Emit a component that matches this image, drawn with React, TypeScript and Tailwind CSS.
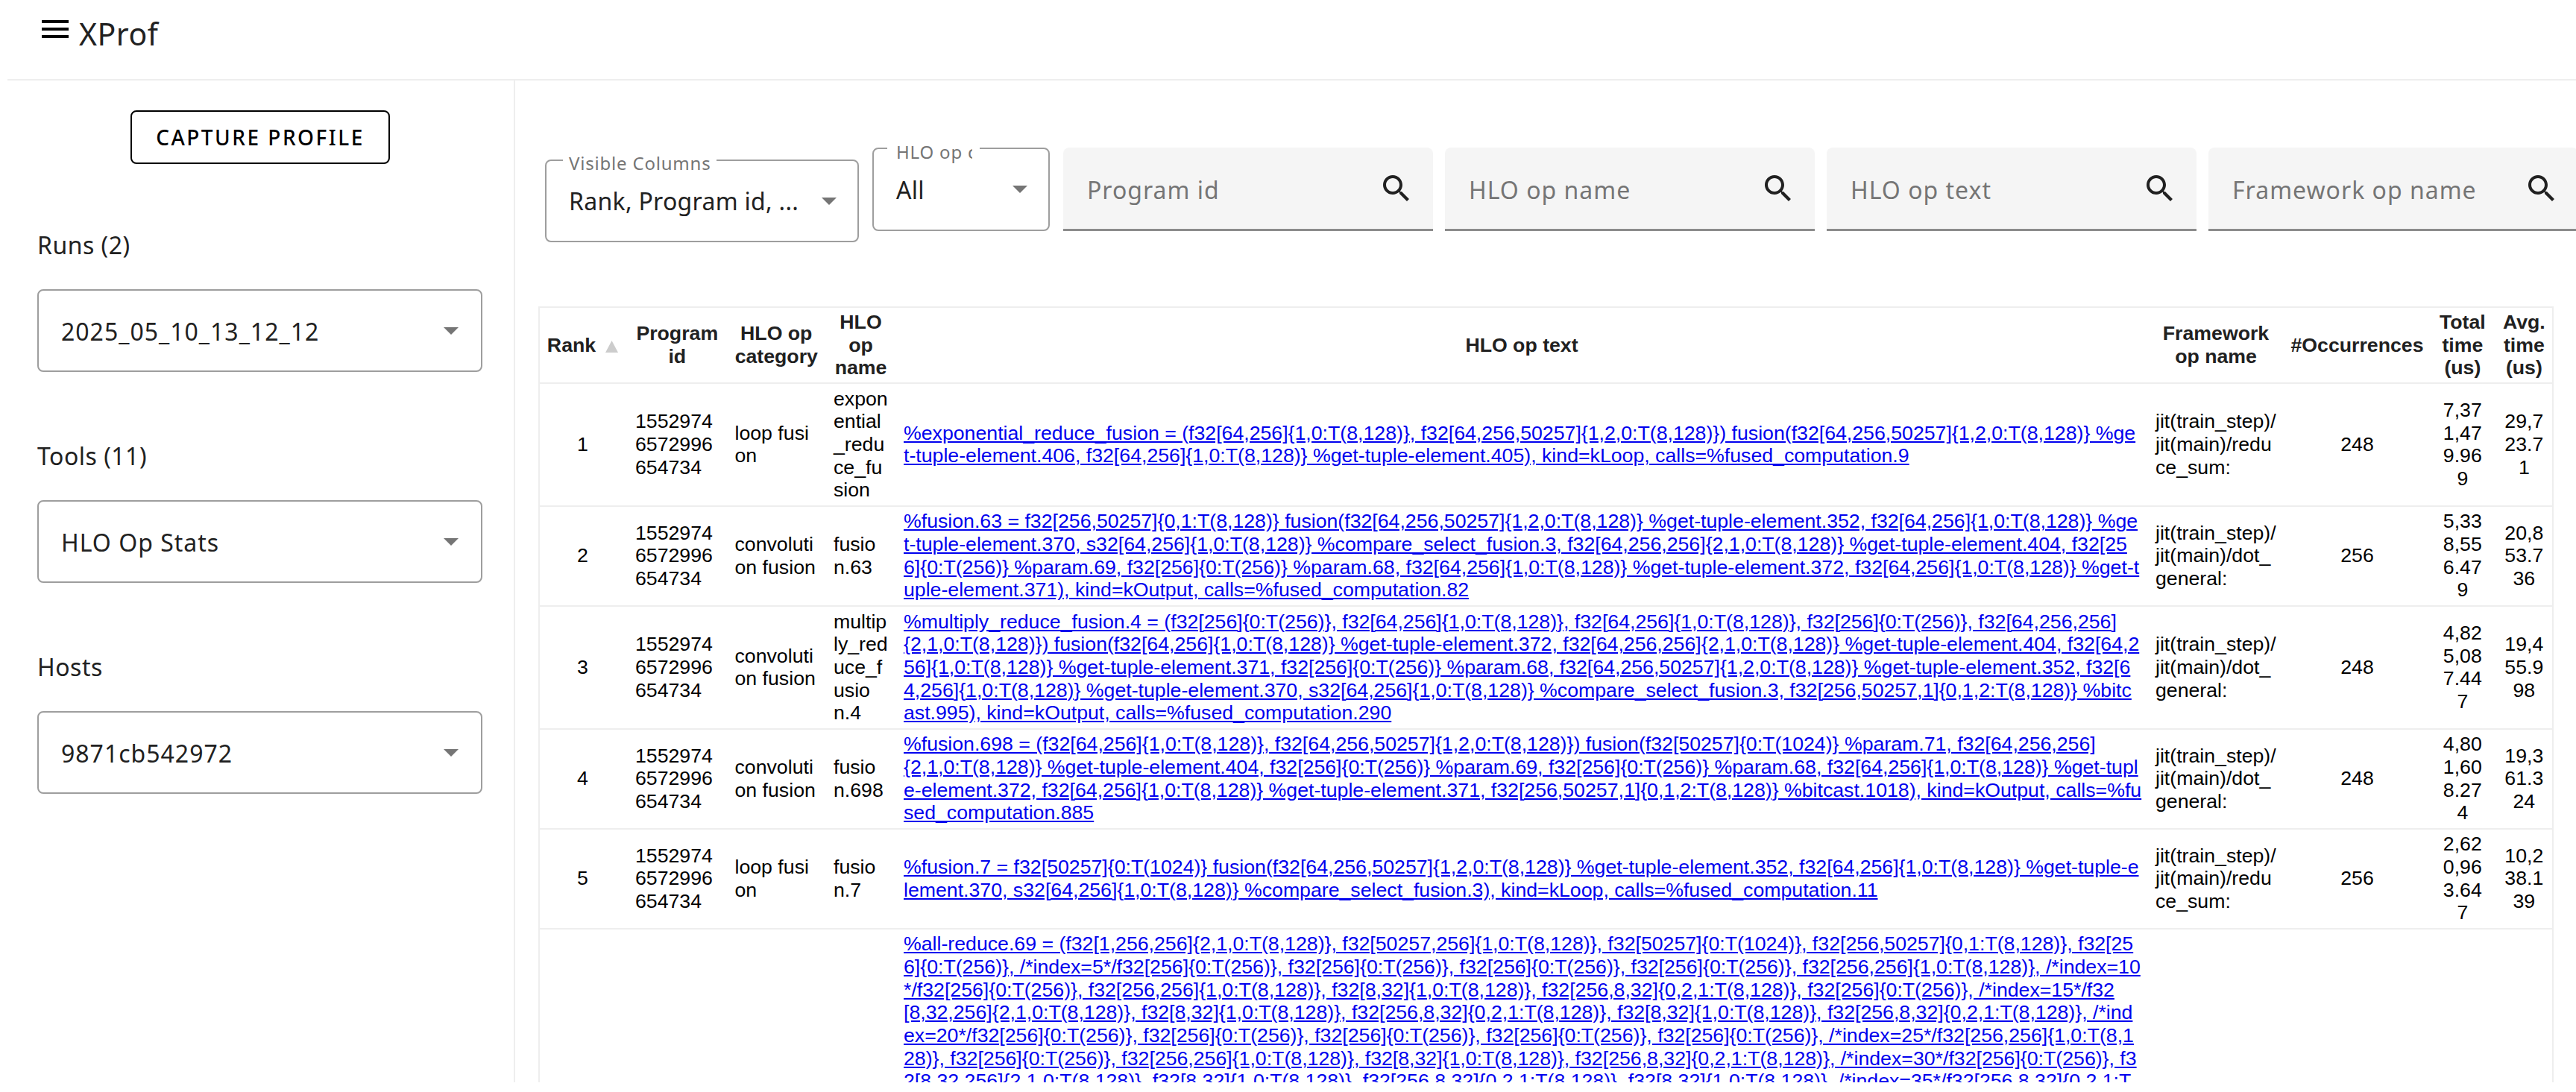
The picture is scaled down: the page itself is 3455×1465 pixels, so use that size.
const uiFont = "font-['Noto_Sans',sans-serif]";

const rows = [
  {
    rank: '1',
    program: '15529746572996654734',
    category: 'loop fusion',
    name: 'exponential_reduce_fusion',
    text: [
      '%exponential_reduce_fusion = (f32[64,256]{1,0:T(8,128)}, f32[64,256,50257]{1,2,0:T(8,128)}) fusion(f32[64,256,50257]{1,2,0:T(8,128)} %ge',
      't-tuple-element.406, f32[64,256]{1,0:T(8,128)} %get-tuple-element.405), kind=kLoop, calls=%fused_computation.9',
    ],
    framework: 'jit(train_step)/jit(main)/reduce_sum:',
    occurrences: '248',
    total: '7,371,479.969',
    avg: '29,723.71',
  },
  {
    rank: '2',
    program: '15529746572996654734',
    category: 'convolution fusion',
    name: 'fusion.63',
    text: [
      '%fusion.63 = f32[256,50257]{0,1:T(8,128)} fusion(f32[64,256,50257]{1,2,0:T(8,128)} %get-tuple-element.352, f32[64,256]{1,0:T(8,128)} %ge',
      't-tuple-element.370, s32[64,256]{1,0:T(8,128)} %compare_select_fusion.3, f32[64,256,256]{2,1,0:T(8,128)} %get-tuple-element.404, f32[25',
      '6]{0:T(256)} %param.69, f32[256]{0:T(256)} %param.68, f32[64,256]{1,0:T(8,128)} %get-tuple-element.372, f32[64,256]{1,0:T(8,128)} %get-t',
      'uple-element.371), kind=kOutput, calls=%fused_computation.82',
    ],
    framework: 'jit(train_step)/jit(main)/dot_general:',
    occurrences: '256',
    total: '5,338,556.479',
    avg: '20,853.736',
  },
  {
    rank: '3',
    program: '15529746572996654734',
    category: 'convolution fusion',
    name: 'multiply_reduce_fusion.4',
    text: [
      '%multiply_reduce_fusion.4 = (f32[256]{0:T(256)}, f32[64,256]{1,0:T(8,128)}, f32[64,256]{1,0:T(8,128)}, f32[256]{0:T(256)}, f32[64,256,256]',
      '{2,1,0:T(8,128)}) fusion(f32[64,256]{1,0:T(8,128)} %get-tuple-element.372, f32[64,256,256]{2,1,0:T(8,128)} %get-tuple-element.404, f32[64,2',
      '56]{1,0:T(8,128)} %get-tuple-element.371, f32[256]{0:T(256)} %param.68, f32[64,256,50257]{1,2,0:T(8,128)} %get-tuple-element.352, f32[6',
      '4,256]{1,0:T(8,128)} %get-tuple-element.370, s32[64,256]{1,0:T(8,128)} %compare_select_fusion.3, f32[256,50257,1]{0,1,2:T(8,128)} %bitc',
      'ast.995), kind=kOutput, calls=%fused_computation.290',
    ],
    framework: 'jit(train_step)/jit(main)/dot_general:',
    occurrences: '248',
    total: '4,825,087.447',
    avg: '19,455.998',
  },
  {
    rank: '4',
    program: '15529746572996654734',
    category: 'convolution fusion',
    name: 'fusion.698',
    text: [
      '%fusion.698 = (f32[64,256]{1,0:T(8,128)}, f32[64,256,50257]{1,2,0:T(8,128)}) fusion(f32[50257]{0:T(1024)} %param.71, f32[64,256,256]',
      '{2,1,0:T(8,128)} %get-tuple-element.404, f32[256]{0:T(256)} %param.69, f32[256]{0:T(256)} %param.68, f32[64,256]{1,0:T(8,128)} %get-tupl',
      'e-element.372, f32[64,256]{1,0:T(8,128)} %get-tuple-element.371, f32[256,50257,1]{0,1,2:T(8,128)} %bitcast.1018), kind=kOutput, calls=%fu',
      'sed_computation.885',
    ],
    framework: 'jit(train_step)/jit(main)/dot_general:',
    occurrences: '248',
    total: '4,801,608.274',
    avg: '19,361.324',
  },
  {
    rank: '5',
    program: '15529746572996654734',
    category: 'loop fusion',
    name: 'fusion.7',
    text: [
      '%fusion.7 = f32[50257]{0:T(1024)} fusion(f32[64,256,50257]{1,2,0:T(8,128)} %get-tuple-element.352, f32[64,256]{1,0:T(8,128)} %get-tuple-e',
      'lement.370, s32[64,256]{1,0:T(8,128)} %compare_select_fusion.3), kind=kLoop, calls=%fused_computation.11',
    ],
    framework: 'jit(train_step)/jit(main)/reduce_sum:',
    occurrences: '256',
    total: '2,620,963.647',
    avg: '10,238.139',
  },
  {
    rank: '',
    program: '',
    category: '',
    name: '',
    text: [
      '%all-reduce.69 = (f32[1,256,256]{2,1,0:T(8,128)}, f32[50257,256]{1,0:T(8,128)}, f32[50257]{0:T(1024)}, f32[256,50257]{0,1:T(8,128)}, f32[25',
      '6]{0:T(256)}, /*index=5*/f32[256]{0:T(256)}, f32[256]{0:T(256)}, f32[256]{0:T(256)}, f32[256]{0:T(256)}, f32[256,256]{1,0:T(8,128)}, /*index=10',
      '*/f32[256]{0:T(256)}, f32[256,256]{1,0:T(8,128)}, f32[8,32]{1,0:T(8,128)}, f32[256,8,32]{0,2,1:T(8,128)}, f32[256]{0:T(256)}, /*index=15*/f32',
      '[8,32,256]{2,1,0:T(8,128)}, f32[8,32]{1,0:T(8,128)}, f32[256,8,32]{0,2,1:T(8,128)}, f32[8,32]{1,0:T(8,128)}, f32[256,8,32]{0,2,1:T(8,128)}, /*ind',
      'ex=20*/f32[256]{0:T(256)}, f32[256]{0:T(256)}, f32[256]{0:T(256)}, f32[256]{0:T(256)}, f32[256]{0:T(256)}, /*index=25*/f32[256,256]{1,0:T(8,1',
      '28)}, f32[256]{0:T(256)}, f32[256,256]{1,0:T(8,128)}, f32[8,32]{1,0:T(8,128)}, f32[256,8,32]{0,2,1:T(8,128)}, /*index=30*/f32[256]{0:T(256)}, f3',
      '2[8,32,256]{2,1,0:T(8,128)}, f32[8,32]{1,0:T(8,128)}, f32[256,8,32]{0,2,1:T(8,128)}, f32[8,32]{1,0:T(8,128)}, /*index=35*/f32[256,8,32]{0,2,1:T',
    ],
    framework: '',
    occurrences: '',
    total: '',
    avg: '',
  },
];

// keep "n.4" together when the cell breaks anywhere
const noBreakAfterPunct = (s: string) => s.replace(/([,.:])(?=\d)/g, '$1\u2060');

function Arrow() {
  return <div className="h-0 w-0 border-x-[10px] border-t-[10px] border-x-transparent border-t-[#757575]" />;
}

function SearchIcon() {
  return (
    <svg viewBox="0 0 24 24" className="h-12 w-12 shrink-0" fill="#212121">
      <path d="M15.5 14h-.79l-.28-.27C15.41 12.59 16 11.11 16 9.5 16 5.91 13.09 3 9.5 3S3 5.91 3 9.5 5.91 16 9.5 16c1.61 0 3.09-.59 4.23-1.57l.27.28v.79l5 4.99L20.49 19l-4.99-5zm-6 0C7.01 14 5 11.99 5 9.5S7.01 5 9.5 5 14 7.01 14 9.5 11.99 14 9.5 14z" />
    </svg>
  );
}

function SideSelect({ label, value }: { label: string; value: string }) {
  return (
    <div className="flex flex-col">
      <div className="h-[44px] text-[32px] leading-[44px] tracking-[0.5px] text-[#212121]">{label}</div>
      <div className="mt-[37px] flex h-[111px] w-[597px] items-center justify-between rounded-lg border-2 border-[#9e9e9e] pl-[30px] pr-[30px]">
        <span className="pt-[2px] text-[32px] tracking-[1px] text-[#212121]">{value}</span>
        <Arrow />
      </div>
    </div>
  );
}

function FilterInput({ placeholder }: { placeholder: string }) {
  return (
    <div className="flex h-[112px] w-[496px] shrink-0 items-center justify-between rounded-t-lg border-b-[3px] border-[#8c8c8c] bg-[#f5f5f5] pl-[32px] pr-[25px]">
      <span className="pt-[4px] text-[32px] tracking-[1px] text-[#757575]">{placeholder}</span>
      <SearchIcon />
    </div>
  );
}

function Header({ children, className = '' }: { children: React.ReactNode; className?: string }) {
  return (
    <th className={`border-b-2 border-[#eeeeee] py-[4px] pl-[8px] pr-[13px] text-center align-middle font-bold text-[#212121] ${className}`}>
      {children}
    </th>
  );
}

function Cell({ children, className = '' }: { children?: React.ReactNode; className?: string }) {
  return (
    <td className={`break-all border-b-2 border-[#eeeeee] py-[4.7px] pl-[8px] pr-[13px] align-middle ${className}`}>
      {children}
    </td>
  );
}

export default function App() {
  return (
    <div className={`flex h-[1465px] w-[3455px] flex-col overflow-hidden bg-white ${uiFont}`}>
      <header className="ml-[10px] flex h-[108px] shrink-0 items-start border-b-2 border-[#eeeeee] pl-[40px] pt-[15px]">
        <svg viewBox="0 0 24 24" className="h-12 w-12" fill="#000000">
          <path d="M3 18h18v-2H3v2zm0-5h18v-2H3v2zm0-7v2h18V6H3z" />
        </svg>
        <span className="ml-[8px] mt-[1px] text-[41px] leading-[58px] tracking-[0.5px] text-[#212121]">XProf</span>
      </header>

      <div className="flex h-[1344px] shrink-0">
        <aside className="flex w-[691px] shrink-0 flex-col border-r-2 border-[#eeeeee] pl-[50px]">
          <button className="ml-[125px] mt-[40px] flex h-[72px] w-[348px] items-center justify-center rounded-lg border-2 border-black text-[28px] font-medium tracking-[2.5px] text-black">
            CAPTURE PROFILE
          </button>
          <div className="mt-[87px] flex flex-col gap-[91px]">
            <SideSelect label="Runs (2)" value="2025_05_10_13_12_12" />
            <SideSelect label="Tools (11)" value="HLO Op Stats" />
            <SideSelect label="Hosts" value="9871cb542972" />
          </div>
        </aside>

        <main className="min-w-0 flex-1 overflow-hidden pl-[31px]">
          <div className="mt-[90px] flex w-[2800px] items-start">
            <div className="relative ml-[9px] mt-[16px] flex h-[111px] w-[421px] shrink-0 items-center justify-between rounded-lg border-2 border-[#9e9e9e] pl-[30px] pr-[28px]">
              <span className="absolute -top-[2px] left-[22px] h-[2px] w-[206px] bg-white" />
              <span className="absolute -top-[15px] left-[30px] text-[24px] tracking-[0.8px] text-[#757575]">Visible Columns</span>
              <span className="text-[32px] tracking-[0.3px] text-[#212121]">Rank, Program id, ...</span>
              <Arrow />
            </div>
            <div className="relative ml-[18px] flex h-[112px] w-[238px] shrink-0 items-center justify-between rounded-lg border-2 border-[#9e9e9e] pl-[30px] pr-[28px]">
              <span className="absolute -top-[2px] left-[18px] h-[2px] w-[124px] bg-white" />
              <span className="absolute -top-[14px] left-[30px] h-[34px] w-[102px] overflow-hidden whitespace-nowrap text-[24px] tracking-[0.8px] text-[#757575]">HLO op category</span>
              <span className="pt-[2px] text-[32px] tracking-[0.3px] text-[#212121]">All</span>
              <Arrow />
            </div>
            <div className="ml-[18px] flex gap-[16px]">
              <FilterInput placeholder="Program id" />
              <FilterInput placeholder="HLO op name" />
              <FilterInput placeholder="HLO op text" />
              <FilterInput placeholder="Framework op name" />
            </div>
          </div>

          <div className="mt-[86px] w-[2703px] border-x-2 border-t-2 border-[#eeeeee] font-['Liberation_Sans',Arial,sans-serif] text-[26.7px] leading-[30.67px] text-black">
            <table className="w-[2699px] table-fixed border-separate border-spacing-0">
              <colgroup>
                <col className="w-[120px]" />
                <col className="w-[133.5px]" />
                <col className="w-[132.5px]" />
                <col className="w-[94px]" />
                <col className="w-[1679px]" />
                <col className="w-[182px]" />
                <col className="w-[198px]" />
                <col className="w-[84.7px]" />
                <col className="w-[75.3px]" />
              </colgroup>
              <thead>
                <tr>
                  <Header className="whitespace-nowrap">
                    Rank
                    <svg viewBox="0 0 17 16" className="ml-[13px] inline-block h-[16px] w-[17px]" fill="#cccccc">
                      <path d="M8.5 0 17 16H0z" />
                    </svg>
                  </Header>
                  <Header>Program id</Header>
                  <Header>HLO op category</Header>
                  <Header>HLO op name</Header>
                  <Header>HLO op text</Header>
                  <Header className="!pr-[12px]">Framework op name</Header>
                  <Header className="!pl-[4px] !pr-[9px]">#Occurrences</Header>
                  <Header>Total time (us)</Header>
                  <Header className="!pr-[8px]">Avg. time (us)</Header>
                </tr>
              </thead>
              <tbody>
                {rows.map((row, i) => (
                  <tr key={i}>
                    <Cell className="text-center">{row.rank}</Cell>
                    <Cell>{row.program}</Cell>
                    <Cell>{row.category}</Cell>
                    <Cell className="!pr-[12px]">{noBreakAfterPunct(row.name)}</Cell>
                    <Cell className="!pr-0">
                      <a href="#" className="whitespace-pre text-[#0000ee] underline">
                        {row.text.join('\n')}
                      </a>
                    </Cell>
                    <Cell className="!pr-[9px]">{row.framework}</Cell>
                    <Cell className="text-center">{row.occurrences}</Cell>
                    <Cell className="text-center">{noBreakAfterPunct(row.total)}</Cell>
                    <Cell className="!pr-[8px] text-center">{noBreakAfterPunct(row.avg)}</Cell>
                  </tr>
                ))}
              </tbody>
            </table>
          </div>
        </main>
      </div>
    </div>
  );
}
